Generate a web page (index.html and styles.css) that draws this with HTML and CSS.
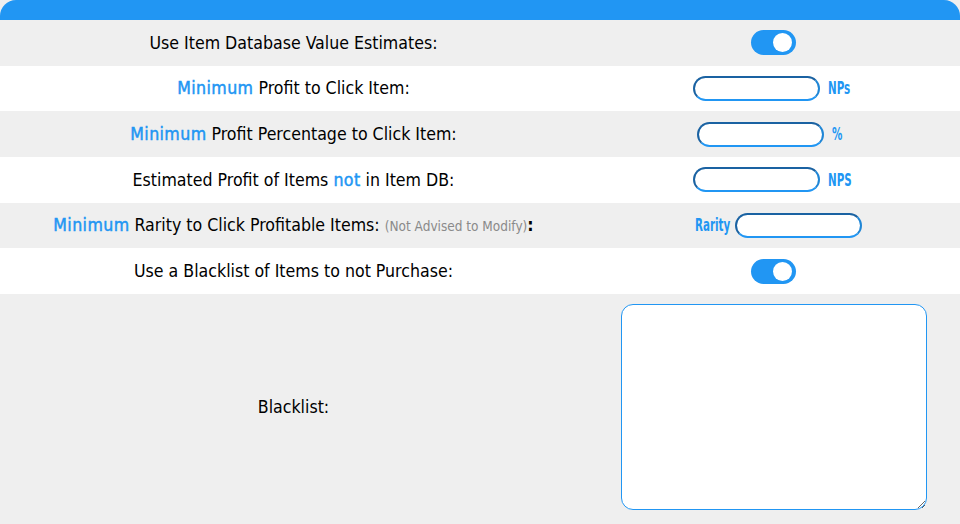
FILE: index.html
```html
<!DOCTYPE html>
<html lang="en">
<head>
<meta charset="utf-8">
<title>Settings</title>
<link rel="stylesheet" href="styles.css">
</head>
<body>
<div class="panel">
  <div class="panel-head"></div>
  <div class="row grey">
    <div class="label">Use Item Database Value Estimates:</div>
    <div class="control"><span class="toggle on"><span class="knob"></span></span></div>
  </div>
  <div class="row white">
    <div class="label"><span class="hl">Minimum</span> Profit to Click Item:</div>
    <div class="control field"><input class="pill" type="text"><span class="unit w-nps"><span>NPs</span></span></div>
  </div>
  <div class="row grey">
    <div class="label"><span class="hl">Minimum</span> Profit Percentage to Click Item:</div>
    <div class="control field"><input class="pill" type="text"><span class="unit w-pct"><span>%</span></span></div>
  </div>
  <div class="row white">
    <div class="label">Estimated Profit of Items <span class="hl">not</span> in Item DB:</div>
    <div class="control field"><input class="pill" type="text"><span class="unit w-nps"><span>NPS</span></span></div>
  </div>
  <div class="row grey">
    <div class="label"><span class="hl">Minimum</span> Rarity to Click Profitable Items: <span class="note">(Not Advised to Modify)</span><b>:</b></div>
    <div class="control rar"><span class="unit w-rar"><span>Rarity</span></span><input class="pill" type="text"></div>
  </div>
  <div class="row white">
    <div class="label">Use a Blacklist of Items to not Purchase:</div>
    <div class="control"><span class="toggle on"><span class="knob"></span></span></div>
  </div>
  <div class="row grey tall">
    <div class="label">Blacklist:</div>
    <div class="control"><textarea class="area"></textarea></div>
  </div>
</div>
</body>
</html>
```
FILE: styles.css
```css
html, body {
  margin: 0;
  padding: 0;
  background: #efefef;
}
body {
  font-family: "DejaVu Sans", sans-serif;
  font-stretch: condensed;
  font-size: 17.6px;
  color: #000;
}
.panel {
  width: 960px;
}
.panel-head {
  height: 20px;
  background: #2196f3;
  border-radius: 16px 16px 0 0;
}
.row {
  display: grid;
  grid-template-columns: 587fr 373fr;
  height: 45.67px;
  align-items: center;
}
.row.grey { background: #efefef; }
.row.white { background: #ffffff; }
.label {
  text-align: center;
  white-space: nowrap;
}
.hl {
  color: #2196f3;
  font-weight: 400;
  -webkit-text-stroke: 0.45px #2196f3;
  letter-spacing: 0.4px;
}
.note {
  color: #8a8a8a;
  font-size: 13.5px;
}
.label b { font-weight: 700; }
.control {
  display: flex;
  justify-content: center;
  align-items: center;
  gap: 8px;
}
.control.field { padding-right: 5px; }
.control.rar { gap: 7px; padding-left: 9px; }
.toggle {
  display: inline-block;
  position: relative;
  width: 45px;
  height: 25px;
  border-radius: 13px;
  background: #2196f3;
}
.toggle .knob {
  position: absolute;
  top: 3px;
  right: 4px;
  width: 19px;
  height: 19px;
  border-radius: 50%;
  background: #fff;
}
.pill {
  box-sizing: border-box;
  width: 127px;
  height: 25px;
  margin: 0;
  padding: 0 10px;
  border: 2px solid #2196f3;
  border-color: #1a62a2 #1f86d6 #2196f3 #1a62a2;
  border-radius: 13px;
  background: #fff;
  outline: none;
}
.unit {
  display: block;
  white-space: nowrap;
  font-family: "DejaVu Sans", sans-serif;
  font-stretch: condensed;
  font-weight: 700;
  font-size: 18.5px;
  line-height: 22px;
  color: #2196f3;
}
.unit > span {
  display: inline-block;
  transform: scaleX(0.62);
  transform-origin: 0 50%;
}
.w-nps { width: 21px; }
.w-pct { width: 13px; }
.w-rar { width: 33px; }
.row.tall {
  height: auto;
  padding: 10px 0 14px;
}
.area {
  box-sizing: border-box;
  display: block;
  width: 306px;
  height: 206px;
  margin: 0;
  border: 1px solid #2196f3;
  border-radius: 12px;
  background: #fff;
  outline: none;
}
```
